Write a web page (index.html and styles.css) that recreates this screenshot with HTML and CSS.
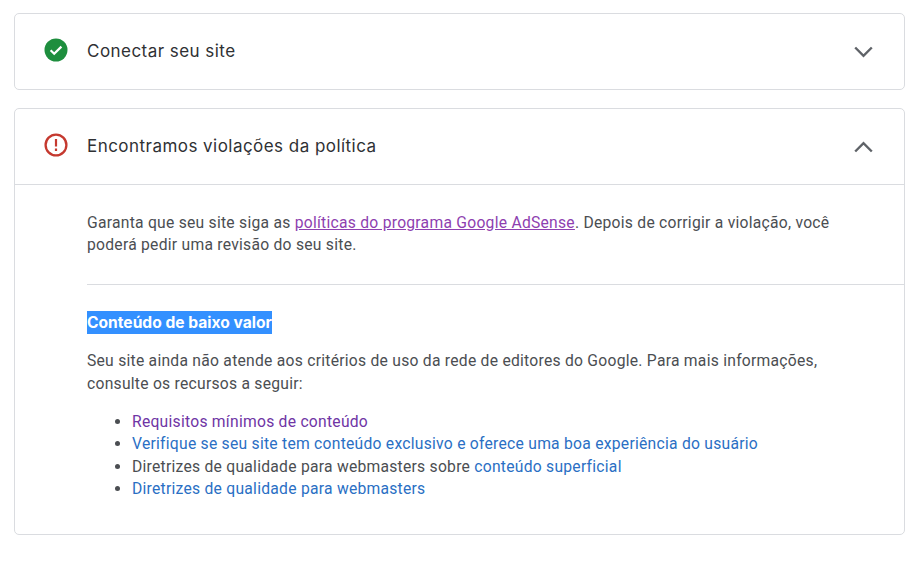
FILE: index.html
```html
<!DOCTYPE html>
<html lang="pt-BR">
<head>
<meta charset="utf-8">
<title>Status do site</title>
<link rel="stylesheet" href="styles.css">
</head>
<body>
<section class="card">
  <header class="head">
    <svg class="status" viewBox="0 0 24 24" width="24" height="24"><circle cx="12" cy="12" r="11.5" fill="#1e8e3e"/><path d="M6.6 12.2l3.6 3.6 7.2-7.2" fill="none" stroke="#fff" stroke-width="2.2"/></svg>
    <h2 class="title">Conectar seu site</h2>
    <svg class="chev" viewBox="0 0 19 12" width="19" height="12"><path d="M1.2 1.5L9.5 9.8l8.3-8.3" fill="none" stroke="#5f6368" stroke-width="2.4"/></svg>
  </header>
</section>
<section class="card">
  <header class="head divided">
    <svg class="status" viewBox="0 0 24 24" width="24" height="24"><circle cx="12" cy="12" r="10.4" fill="none" stroke="#c5392f" stroke-width="2.3"/><path d="M10.9 6h2.2v7.6h-2.2zM10.9 15.6h2.2v2.3h-2.2z" fill="#c5392f"/></svg>
    <h2 class="title">Encontramos violações da política</h2>
    <svg class="chev" viewBox="0 0 19 12" width="19" height="12"><path d="M1.2 10.5L9.5 2.2l8.3 8.3" fill="none" stroke="#5f6368" stroke-width="2.4"/></svg>
  </header>
  <div class="body">
    <p class="intro">Garanta que seu site siga as <a class="visited underlined" href="#a">políticas do programa Google AdSense</a>. Depois de corrigir a violação, você poderá pedir uma revisão do seu site.</p>
    <div class="detail">
      <h3 class="sub"><span class="selected">Conteúdo de baixo valor</span></h3>
      <p class="desc">Seu site ainda não atende aos critérios de uso da rede de editores do Google. Para mais informações, consulte os recursos a seguir:</p>
      <ul class="links">
        <li><a class="visited-dark" href="#b">Requisitos mínimos de conteúdo</a></li>
        <li><a href="#c">Verifique se seu site tem conteúdo exclusivo e oferece uma boa experiência do usuário</a></li>
        <li>Diretrizes de qualidade para webmasters sobre <a href="#d">conteúdo superficial</a></li>
        <li><a href="#e">Diretrizes de qualidade para webmasters</a></li>
      </ul>
    </div>
  </div>
</section>
</body>
</html>
```
FILE: styles.css
```css
html, body { margin: 0; padding: 0; background: #fff; }
body {
  padding: 13px 12px 0 14px;
  font-family: Roboto, "Liberation Sans", sans-serif;
  font-size: 15.68px;
  letter-spacing: 0.25px;
  line-height: 22.4px;
  color: #4b4e52;
}
.card {
  border: 1px solid #dadce0;
  border-radius: 5px;
  margin-bottom: 18px;
  background: #fff;
}
.head {
  display: flex;
  align-items: center;
  height: 75px;
  padding: 0 31px 0 29px;
}
.divided { border-bottom: 1px solid #dadce0; }
.status { flex: none; margin: 0 19px 3px 0; }
.title {
  flex: 1;
  margin: 0;
  font-family: Inter, "Open Sans", sans-serif;
  font-size: 17px;
  font-weight: 400;
  letter-spacing: 0.46px;
  color: #2f3134;
}
.chev { flex: none; }
.body { padding: 27px 0 33px 72px; }
.intro { margin: 0; padding-right: 60px; }
.detail { margin-top: 27px; border-top: 1px solid #dadce0; padding-top: 27px; }
.sub {
  margin: 0;
  font-family: Inter, "Open Sans", sans-serif;
  font-size: 15.6px;
  font-weight: 700;
  letter-spacing: 0;
  line-height: 22.4px;
  color: #2f3134;
}
.selected { background: #3390ff; color: #fff; padding: 2px 0; }
.desc { margin: 16px 0 0; padding-right: 60px; }
.links { margin: 16px 0 0; padding: 0 0 0 45px; }
a { color: #2a6fc4; text-decoration: none; }
.visited { color: #8e3fb0; }
.underlined { text-decoration: underline; }
.visited-dark { color: #6f35a5; }
```
